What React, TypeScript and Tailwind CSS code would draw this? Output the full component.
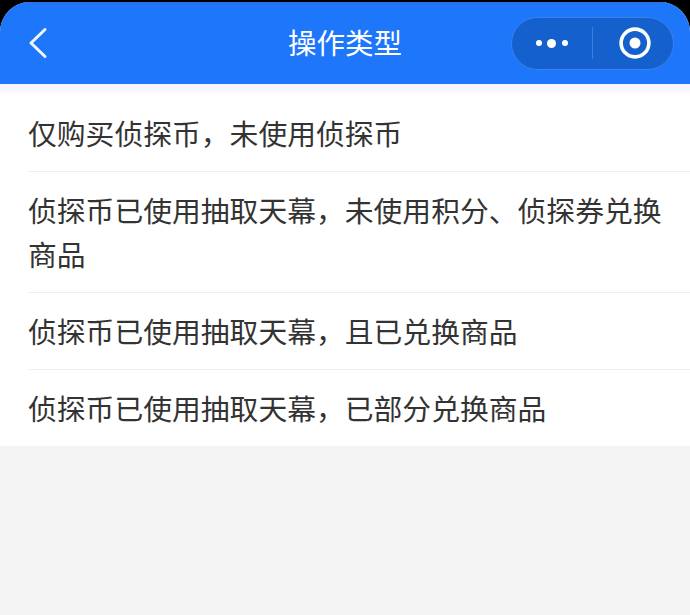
const rows = [
  "仅购买侦探币，未使用侦探币",
  "侦探币已使用抽取天幕，未使用积分、侦探券兑换商品",
  "侦探币已使用抽取天幕，且已兑换商品",
  "侦探币已使用抽取天幕，已部分兑换商品",
];

export default function App() {
  return (
    <div className="w-[690px] h-[615px] overflow-hidden bg-black flex flex-col font-['Noto_Sans_CJK_SC','Noto_Sans',sans-serif]">
      <div className="h-[2px] shrink-0 bg-black" />
      <div className="flex-1 flex flex-col rounded-t-[30px] overflow-hidden bg-[#f4f4f4]">
        <header className="h-[82px] shrink-0 bg-[#1e76fb] flex items-center justify-between pl-[27px] pr-[16px] relative border-t border-[#2a6fd8]">
          <svg width="22" height="34" viewBox="0 0 22 34" fill="none" className="-mt-[2px]">
            <path d="M18 3.5 L4 17 L18 30.5" stroke="#f2f7ff" strokeWidth="3" strokeLinecap="round" strokeLinejoin="round" />
          </svg>
          <div className="absolute left-0 right-0 -mt-[3px] text-center text-white text-[28.5px] leading-[40px] pointer-events-none">操作类型</div>
          <div className="w-[163px] h-[53px] -mt-[1px] rounded-full bg-[#1460cd] border border-[#3b82ea] flex items-center">
            <div className="w-[79px] flex items-center justify-center gap-[5.5px]">
              <span className="w-[6px] h-[6px] rounded-full bg-white" />
              <span className="w-[9px] h-[9px] rounded-full bg-white" />
              <span className="w-[6px] h-[6px] rounded-full bg-white" />
            </div>
            <div className="ml-px w-px h-[32px] bg-[#3b7fe0]" />
            <div className="flex-1 flex items-center justify-center pl-[3px]">
              <svg width="32" height="32" viewBox="0 0 32 32" fill="none">
                <circle cx="16" cy="16" r="13.9" stroke="#fff" strokeWidth="3.6" />
                <circle cx="16" cy="16" r="5.5" fill="#fff" />
              </svg>
            </div>
          </div>
        </header>
        <div className="h-[11px] shrink-0 bg-gradient-to-b from-[#f6f2fd] via-[#f8f6fd] to-white" />
        <ul className="bg-white">
          {rows.map((t, i) => (
            <li key={t} className={`ml-[28px] pr-[28px] py-[16px] text-[28.8px] leading-[44px] text-[#333333] ${i ? "border-t border-[#efefef]" : ""}`}>
              {t}
            </li>
          ))}
        </ul>
      </div>
    </div>
  );
}
